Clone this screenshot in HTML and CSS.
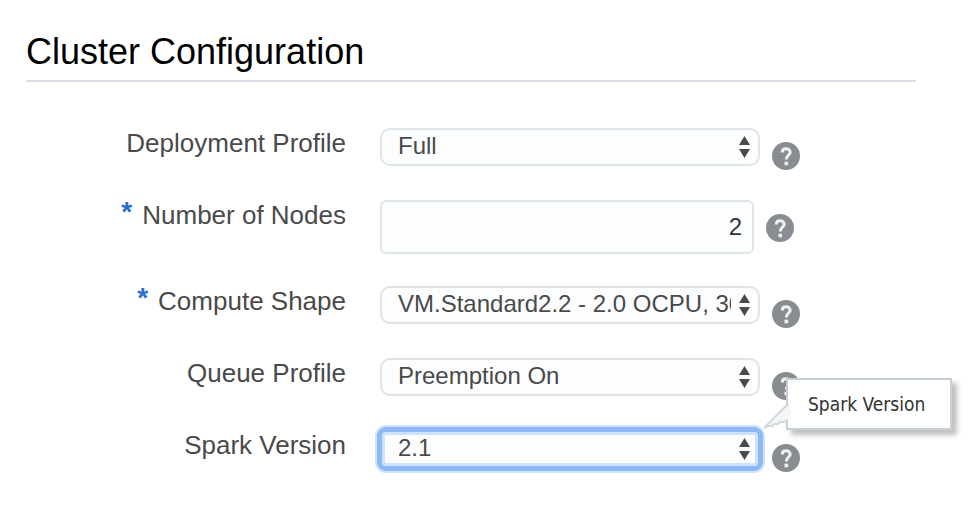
FILE: index.html
```html
<!DOCTYPE html>
<html lang="en">
<head>
<meta charset="utf-8">
<meta name="viewport" content="width=device-width, initial-scale=1">
<title>Cluster Configuration</title>
<link rel="stylesheet" href="styles.css">
</head>
<body>
<svg class="symbols" aria-hidden="true">
  <symbol id="arrows" viewBox="0 0 12 22">
    <path d="M5.500 0 11 9H0ZM0 13h11L5.500 22Z" fill="#4a4a4a"/>
  </symbol>
  <symbol id="help" viewBox="0 0 28 28">
    <circle cx="14" cy="14" r="14" fill="#898c91"/>
    <path d="M10.300 10.500C10.300 7.800 11.800 6.700 14 6.700S18.200 7.900 18.200 10.200C18.200 13 14.300 13.300 14.300 17.600" fill="none" stroke="#eff0f1" stroke-width="3"/>
    <path d="M12.500 19.700h3.600v3.600h-3.600z" fill="#eff0f1"/>
  </symbol>
</svg>
<main class="page">
  <h1 class="title">Cluster Configuration</h1>
  <form class="form">
    <div class="row">
      <label class="label" for="deployment">Deployment Profile</label>
      <div class="field">
        <div class="picker">
          <select class="select" id="deployment"><option>Full</option></select>
          <svg class="arrows" aria-hidden="true"><use href="#arrows"/></svg>
        </div>
        <button class="help" type="button" aria-label="Help"><svg class="help-icon"><use href="#help"/></svg></button>
      </div>
    </div>
    <div class="row">
      <label class="label" for="nodes"><span class="required">*</span>Number of Nodes</label>
      <div class="field">
        <input class="number" id="nodes" type="text" inputmode="numeric" value="2">
        <button class="help" type="button" aria-label="Help"><svg class="help-icon"><use href="#help"/></svg></button>
      </div>
    </div>
    <div class="row">
      <label class="label" for="shape"><span class="required">*</span>Compute Shape</label>
      <div class="field">
        <div class="picker">
          <select class="select" id="shape"><option>VM.Standard2.2 - 2.0 OCPU, 30</option></select>
          <svg class="arrows" aria-hidden="true"><use href="#arrows"/></svg>
        </div>
        <button class="help" type="button" aria-label="Help"><svg class="help-icon"><use href="#help"/></svg></button>
      </div>
    </div>
    <div class="row">
      <label class="label" for="queue">Queue Profile</label>
      <div class="field">
        <div class="picker">
          <select class="select" id="queue"><option>Preemption On</option></select>
          <svg class="arrows" aria-hidden="true"><use href="#arrows"/></svg>
        </div>
        <button class="help" type="button" aria-label="Help"><svg class="help-icon"><use href="#help"/></svg></button>
      </div>
    </div>
    <div class="row">
      <label class="label" for="spark">Spark Version</label>
      <div class="field">
        <div class="picker">
          <select class="select select-active" id="spark"><option>2.1</option></select>
          <svg class="arrows" aria-hidden="true"><use href="#arrows"/></svg>
          <div class="tooltip" role="tooltip">
            Spark Version
            <svg class="tail" viewBox="0 0 28 28" aria-hidden="true">
              <path d="M28 1 2 26 6 23.500H10L12 21.500H16L18 19.500H22L24 17.500H28Z" fill="#f5f6f7"/>
              <path d="M26 2 2 26M2 26 6 24H10L12 22H16L18 20H22L25 18" fill="none" stroke="#d0d8e2" stroke-width="2"/>
            </svg>
          </div>
        </div>
        <button class="help" type="button" aria-label="Help"><svg class="help-icon"><use href="#help"/></svg></button>
      </div>
    </div>
  </form>
</main>
</body>
</html>
```
FILE: styles.css
```css
* {
  box-sizing: border-box;
}

body {
  margin: 0;
  background: #fff;
  color: #4a4a4a;
  font-family: "Liberation Sans", Arial, sans-serif;
}

.symbols {
  display: none;
}

.page {
  padding: 32px 60px 32px 26px;
}

.title {
  margin: 0 0 46px;
  padding-bottom: 8px;
  border-bottom: 2px solid #d9dee4;
  color: #000;
  font-size: 36px;
  font-weight: 400;
  line-height: 40px;
}

.form {
  display: flex;
  flex-direction: column;
  gap: 30px;
}

.row {
  display: grid;
  grid-template-columns: 320px minmax(0, 1fr);
  column-gap: 34px;
}

.label {
  display: flex;
  justify-content: flex-end;
  align-items: flex-start;
  gap: 10px;
  font-size: 26px;
  line-height: 30px;
}

.required {
  color: #2b6ccf;
  font-size: 28px;
  font-weight: 700;
  line-height: 24px;
}

.field {
  display: flex;
  align-items: flex-start;
  gap: 12px;
}

.picker {
  position: relative;
  flex: 0 1 380px;
}

.select,
.number {
  display: block;
  margin: 0;
  border: 2px solid #dfe5e7;
  background: #fcfdff;
  font-family: inherit;
  font-size: 24px;
}

.select {
  width: 100%;
  height: 38px;
  padding: 0 27px 4px 16px;
  border-radius: 10px;
  color: #4a4a4a;
  appearance: none;
}

.select-active {
  border-color: #8cb9f6;
  border-radius: 6px;
  box-shadow: inset 0 0 0 3px #cfe2fb, 0 0 0 3px #8cb9f6, 0 0 0 5px #cfe2fb;
}

.number {
  flex: 0 1 374px;
  min-width: 0;
  height: 54px;
  margin-bottom: 2px;
  padding: 0 10px;
  border-radius: 6px;
  color: #333;
  text-align: right;
}

.arrows {
  position: absolute;
  top: 8px;
  right: 9px;
  width: 12px;
  height: 22px;
  pointer-events: none;
}

.help {
  flex: none;
  margin: 14px 0 0;
  padding: 0;
  border: 0;
  background: none;
}

.help-icon {
  display: block;
  width: 28px;
  height: 28px;
}

.tooltip {
  position: absolute;
  z-index: 1;
  bottom: 38px;
  left: 406px;
  width: 166px;
  padding: 12px 0 12px 20px;
  border: 2px solid #c6d0d9;
  background: #fff;
  box-shadow: 5px 5px 5px rgba(0, 0, 0, 0.25);
  color: #333;
  font-family: "DejaVu Sans Condensed", Tahoma, sans-serif;
  font-size: 19px;
  line-height: 24px;
  white-space: nowrap;
}

.tail {
  position: absolute;
  top: 22px;
  left: -26px;
  width: 28px;
  height: 28px;
}
```
